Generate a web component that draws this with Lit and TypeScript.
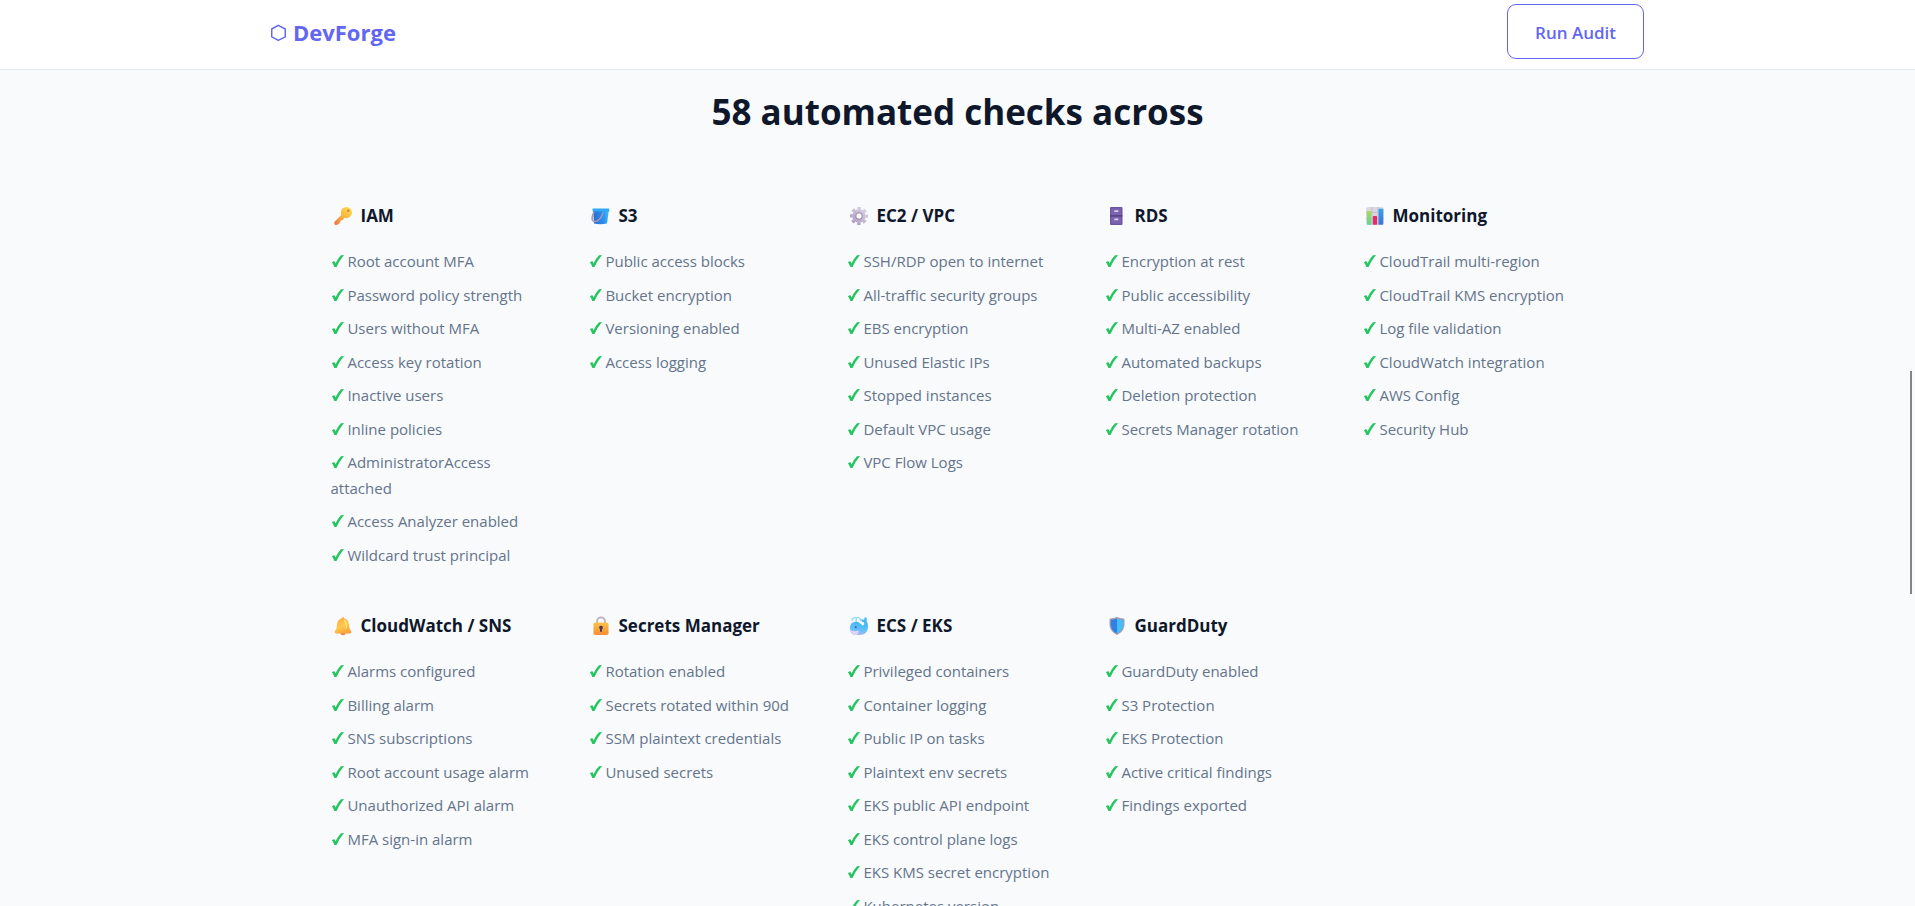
import { LitElement, html, svg, css, nothing, type SVGTemplateResult } from "lit";
import { customElement, property } from "lit/decorators.js";

interface CheckGroup {
  icon: string;
  title: string;
  checks: string[];
}

const GROUPS: CheckGroup[] = [
  {
    icon: "key",
    title: "IAM",
    checks: [
      "Root account MFA",
      "Password policy strength",
      "Users without MFA",
      "Access key rotation",
      "Inactive users",
      "Inline policies",
      "AdministratorAccess attached",
      "Access Analyzer enabled",
      "Wildcard trust principal",
    ],
  },
  {
    icon: "bucket",
    title: "S3",
    checks: ["Public access blocks", "Bucket encryption", "Versioning enabled", "Access logging"],
  },
  {
    icon: "gear",
    title: "EC2 / VPC",
    checks: [
      "SSH/RDP open to internet",
      "All-traffic security groups",
      "EBS encryption",
      "Unused Elastic IPs",
      "Stopped instances",
      "Default VPC usage",
      "VPC Flow Logs",
    ],
  },
  {
    icon: "cabinet",
    title: "RDS",
    checks: [
      "Encryption at rest",
      "Public accessibility",
      "Multi-AZ enabled",
      "Automated backups",
      "Deletion protection",
      "Secrets Manager rotation",
    ],
  },
  {
    icon: "chart",
    title: "Monitoring",
    checks: [
      "CloudTrail multi-region",
      "CloudTrail KMS encryption",
      "Log file validation",
      "CloudWatch integration",
      "AWS Config",
      "Security Hub",
    ],
  },
  {
    icon: "bell",
    title: "CloudWatch / SNS",
    checks: [
      "Alarms configured",
      "Billing alarm",
      "SNS subscriptions",
      "Root account usage alarm",
      "Unauthorized API alarm",
      "MFA sign-in alarm",
    ],
  },
  {
    icon: "lock",
    title: "Secrets Manager",
    checks: ["Rotation enabled", "Secrets rotated within 90d", "SSM plaintext credentials", "Unused secrets"],
  },
  {
    icon: "whale",
    title: "ECS / EKS",
    checks: [
      "Privileged containers",
      "Container logging",
      "Public IP on tasks",
      "Plaintext env secrets",
      "EKS public API endpoint",
      "EKS control plane logs",
      "EKS KMS secret encryption",
      "Kubernetes version",
    ],
  },
  {
    icon: "shield",
    title: "GuardDuty",
    checks: [
      "GuardDuty enabled",
      "S3 Protection",
      "EKS Protection",
      "Active critical findings",
      "Findings exported",
    ],
  },
];

const ICONS: Record<string, SVGTemplateResult> = {
  key: svg`
    <defs><linearGradient id="g" x1="18" y1="4" x2="5" y2="20" gradientUnits="userSpaceOnUse">
      <stop offset="0" stop-color="#ffd84a"/><stop offset=".5" stop-color="#f9b43c"/><stop offset="1" stop-color="#ee7a4c"/>
    </linearGradient></defs>
    <path d="M15.4 3a5.6 5.6 0 0 1 5.6 5.5 5.5 5.5 0 0 1-7.3 5.3L11.500 16.200 9.700 16.300 9.300 18.200 7.200 20.300Q5.200 21.600 3.600 20.500 2.500 18.800 4 17.200L10.400 11A5.600 5.600 0 0 1 15.400 3Z" fill="url(#g)"/>
    <circle cx="17.300" cy="6.700" r="1.200" fill="#c08a45"/>`,
  bucket: svg`
    <defs><linearGradient id="g" x1="5" y1="12" x2="20" y2="10" gradientUnits="userSpaceOnUse">
      <stop offset="0" stop-color="#2d6fd0"/><stop offset=".6" stop-color="#2b8fee"/><stop offset="1" stop-color="#38c0fb"/>
    </linearGradient></defs>
    <path d="M4 5H20L18 19.500Q11 20.800 5 19.500Z" fill="url(#g)"/>
    <path d="M3.500 4.600H20.200V7.600H3.700Z" fill="#31a8f5"/>
    <path d="M5 7.800Q2.400 13 3.400 16.400 5 18.600 8.800 16.600 12.600 14 14 8.600" fill="none" stroke="#a99bb8" stroke-width="1.500"/>`,
  gear: svg`
    <defs><linearGradient id="g" x1="19" y1="4" x2="6" y2="20" gradientUnits="userSpaceOnUse">
      <stop offset="0" stop-color="#ddd5e8"/><stop offset="1" stop-color="#ab9cc0"/>
    </linearGradient></defs>
    <g fill="none" stroke="url(#g)">
      <circle cx="12" cy="12" r="4.800" stroke-width="3.800"/>
      <circle cx="12" cy="12" r="7.600" stroke-width="2.900" stroke-dasharray="3.400 2.569" stroke-dashoffset="1.700"/>
    </g>
    <circle cx="12" cy="12" r="3.300" fill="none" stroke="#998aa5" stroke-width="1"/>`,
  cabinet: svg`
    <rect x="5" y="3" width="12.500" height="18" rx="1" fill="#6c569c"/>
    <path d="M6.300 4.200H16V11H6.300ZM6.300 12.800H16V19.600H6.300Z" fill="#7c62b2"/>
    <path d="M5 11.300H17.500V12.500H5Z" fill="#54407f"/>
    <path d="M9.300 6.300H13.300V8H9.300ZM9.300 14.600H13.300V16.300H9.300Z" fill="#d9cfe9"/>`,
  chart: svg`
    <defs>
      <linearGradient id="g" x2="0" y2="1"><stop stop-color="#a5de4e"/><stop offset="1" stop-color="#5bd894"/></linearGradient>
      <linearGradient id="h" x2="0" y2="1"><stop stop-color="#35a3ee"/><stop offset="1" stop-color="#3a76d8"/></linearGradient>
    </defs>
    <rect x="3" y="3" width="18" height="18" rx="2.500" fill="#dcd6e3"/>
    <path d="M3 8.500H21M9 3V21M15 3V21M3 14.500H21" stroke="#c3bacd" stroke-width=".8"/>
    <rect x="4" y="7" width="4.300" height="13.800" rx=".8" fill="url(#g)"/>
    <rect x="9.800" y="12" width="4.300" height="8.800" rx=".8" fill="#e42d68"/>
    <rect x="15.500" y="4.800" width="4.700" height="16" rx=".8" fill="url(#h)"/>`,
  bell: svg`
    <defs><linearGradient id="g" x1="8" y1="4" x2="15" y2="20" gradientUnits="userSpaceOnUse">
      <stop offset="0" stop-color="#fbab45"/><stop offset=".5" stop-color="#ffc84c"/><stop offset="1" stop-color="#f99d3b"/>
    </linearGradient></defs>
    <ellipse cx="12" cy="19.500" rx="2.600" ry="1.700" fill="#e98249"/>
    <path d="M10.600 4.600Q10.600 3 12 3T13.400 4.600Q17.600 5.800 18 10.500L18.500 14.500 20.300 17.500Q20.800 19.300 19 19.400H5Q3.200 19.300 3.700 17.500L5.500 14.500 6 10.500Q6.400 5.800 10.600 4.600Z" fill="url(#g)"/>
    <path d="M13 6Q15.600 8 15.300 14.500" fill="none" stroke="#ffe070" stroke-width="1.600"/>`,
  lock: svg`
    <defs><linearGradient id="g" x2="0" y2="1">
      <stop stop-color="#fec34a"/><stop offset="1" stop-color="#f68c37"/>
    </linearGradient></defs>
    <path d="M8 9.500V7.500a4 4 0 0 1 8 0V9.500" fill="none" stroke="#bdb4c6" stroke-width="1.900"/>
    <rect x="4.500" y="8.500" width="15" height="12.500" rx="1.800" fill="url(#g)"/>
    <path d="M12 11.700a1.900 1.900 0 0 1 1 3.500V17.800H11V15.200a1.900 1.900 0 0 1 1-3.500Z" fill="#4c3a55"/>`,
  whale: svg`
    <defs><linearGradient id="g" x1="13" y1="8" x2="11" y2="21" gradientUnits="userSpaceOnUse">
      <stop offset="0" stop-color="#41b8f5"/><stop offset=".6" stop-color="#62c0fa"/><stop offset="1" stop-color="#b5b6f5"/>
    </linearGradient></defs>
    <path d="M9.300 8V5.500M5.200 6.500Q4.800 4 6.800 4.300M7.500 3.600Q9.300 3 9.400 5 9.600 3 11.500 3.600M12.500 4.400Q13.900 4.500 13.300 6.500" fill="none" stroke="#9bdcf8" stroke-width="1.500" stroke-linecap="round"/>
    <path d="M3 14C3 9.800 5.800 7.800 9 7.800 13 7.800 14.200 11 15.600 11.400 17.300 11.300 17.500 9.500 17 8.300 14.800 8 14 6.800 14.200 5.200L17 5.700Q17.600 3.300 19 3 20.300 5 19.600 7 21 9.300 21 13 20.700 20.800 12.500 21H8Q3 20.500 3 14Z" fill="url(#g)"/>
    <path d="M3.600 16Q7.500 18.300 11.500 16.200 12.300 19.300 9.500 21H8Q4.200 20.600 3.600 16Z" fill="#dcd4f7"/>
    <circle cx="8.800" cy="13.200" r=".9" fill="#27568c"/>`,
  shield: svg`
    <path d="M12 3Q15.300 4.300 18.500 4.500 19.500 4.600 19.500 5.800V11Q19 17.500 12 21 5 17.500 4.500 11V5.800Q4.500 4.600 5.500 4.500 8.700 4.300 12 3Z" fill="#a89bad"/>
    <path d="M12 4.400Q8.700 5.600 5.800 5.700V11Q6.200 16.500 12 19.600Z" fill="#2f7fe6"/>
    <path d="M12 4.400Q15.300 5.600 18.200 5.700V11Q17.800 16.500 12 19.600Z" fill="#44bdfb"/>`,
};

@customElement("check-group")
class CheckGroupElement extends LitElement {
  @property({ attribute: false }) group?: CheckGroup;

  static styles = css`
    :host {
      display: block;
      min-width: 0;
    }
    .title {
      display: flex;
      align-items: center;
      gap: 6px;
      margin: 0 0 19px;
      font-size: 17px;
      line-height: 28px;
      font-weight: 700;
      color: #0f172a;
      white-space: nowrap;
    }
    .icon {
      flex: none;
      width: 24px;
      height: 24px;
    }
    .list {
      margin: 0;
      padding: 0;
      list-style: none;
      font-size: 15px;
      line-height: 1.7;
      color: #64748b;
    }
    .item {
      margin-bottom: 8px;
    }
    .tick {
      width: 13px;
      height: 12px;
      fill: #22c55e;
    }
  `;

  render() {
    const group = this.group;
    if (!group) return nothing;
    return html`
      <h3 class="title">
        <svg class="icon" viewBox="0 0 24 24" aria-hidden="true">${ICONS[group.icon]}</svg>
        ${group.title}
      </h3>
      <ul class="list">
        ${group.checks.map(
          (check) => html`<li class="item"><svg class="tick" viewBox="0 0 13 12" aria-hidden="true">
            <path d="M.9 7.300 3.200 6.100Q4 7 4.500 8.400 6.600 3.700 10 .2L13 0Q8.600 5 5.500 12H3.400Q2.400 9.200.9 7.300Z" /></svg> ${check}</li>`,
        )}
      </ul>
    `;
  }
}

@customElement("app-root")
class AppRoot extends LitElement {
  static styles = css`
    :host {
      display: block;
      position: relative;
      height: 100vh;
      overflow: hidden;
      background: #f8fafc;
      color: #0f172a;
      font-family: "Open Sans", "Noto Sans", sans-serif;
    }
    .header {
      background: #ffffff;
      border-bottom: 1px solid #e2e8f0;
    }
    .bar {
      display: flex;
      align-items: center;
      justify-content: space-between;
      max-width: 1373px;
      margin: 0 auto;
      padding: 4px 0 10px;
    }
    .logo {
      display: flex;
      align-items: center;
      gap: 6px;
      font-size: 22px;
      line-height: 30px;
      font-weight: 700;
      color: #6366f1;
      text-decoration: none;
    }
    .hex {
      width: 16px;
      height: 18px;
      fill: none;
      stroke: #6366f1;
      stroke-width: 1.5;
    }
    .audit {
      padding: 14px 27px 12px;
      border: 1px solid #6366f1;
      border-radius: 9px;
      background: transparent;
      color: #6366f1;
      font-family: inherit;
      font-size: 17px;
      line-height: 27px;
      font-weight: 600;
      cursor: pointer;
    }
    .section {
      max-width: 1254px;
      margin: 0 auto;
      padding: 20px 0;
    }
    .heading {
      margin: 0 0 68px;
      font-size: 35px;
      line-height: 44px;
      font-weight: 700;
      text-align: center;
    }
    .grid {
      display: grid;
      grid-template-columns: repeat(5, 1fr);
      gap: 36px;
    }
    .scroll-thumb {
      position: absolute;
      top: 41%;
      right: 3px;
      width: 2px;
      height: 24.6%;
      background: #858585;
    }
  `;

  render() {
    return html`
      <header class="header">
        <div class="bar">
          <a class="logo" href="#">
            <svg class="hex" viewBox="0 0 16 18" aria-hidden="true">
              <path d="M7.300 2.300 14.300 6V13.800L7.300 17.300.7 13.800V6Z" />
            </svg>
            DevForge
          </a>
          <button class="audit" type="button">Run Audit</button>
        </div>
      </header>
      <main class="section">
        <h2 class="heading">58 automated checks across</h2>
        <div class="grid">
          ${GROUPS.map((group) => html`<check-group .group=${group}></check-group>`)}
        </div>
      </main>
      <div class="scroll-thumb"></div>
    `;
  }
}
